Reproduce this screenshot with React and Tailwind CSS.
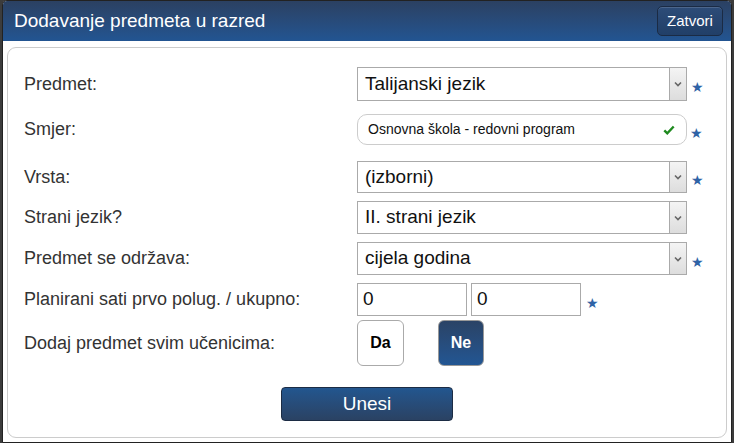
import React from "react";

const font = { fontFamily: '"Liberation Sans", Arial, sans-serif' };

const Star = ({ className = "" }) => (
  <span className={`text-[14px] leading-none text-[#2f63a6] ${className}`}>★</span>
);

const Select = ({ value }) => (
  <div className="flex h-full w-[330px] items-stretch border border-[#aaaaaa] bg-white">
    <div className="flex flex-1 items-center pl-[7px] text-[19px] text-[#111]">{value}</div>
    <div className="flex w-[17px] items-center justify-center border-l border-[#aaaaaa] bg-gradient-to-b from-[#f4f4f4] to-[#dddddd]">
      <svg width="8" height="6" viewBox="0 0 8 6">
        <path d="M1 1.5 L4 4.5 L7 1.5" fill="none" stroke="#666" strokeWidth="1.6" />
      </svg>
    </div>
  </div>
);

const Row = ({ label, className, children }) => (
  <div className={`flex items-center ${className}`}>
    <div className="w-[333px] text-[18px] text-[#333]">{label}</div>
    <div className="flex h-full items-center">{children}</div>
  </div>
);

export default function App() {
  return (
    <div className="h-[443px] w-[734px] overflow-hidden bg-[#3c3c3c]" style={font}>
      <div className="ml-[2px] flex h-full w-[730px] flex-col overflow-hidden rounded-t-[5px] border border-[#222] bg-white">
        {/* header */}
        <div className="flex h-[40px] shrink-0 items-center justify-between bg-gradient-to-b from-[#2b4162] to-[#225592] pl-[11px] pr-[8px]">
          <span className="text-[19px] text-white">Dodavanje predmeta u razred</span>
          <button className="h-[30px] w-[66px] rounded-[5px] border border-[#1b2b44] bg-gradient-to-b from-[#2d4c78] to-[#213f68] text-[15px] text-white shadow-[inset_0_1px_0_rgba(255,255,255,0.15)]">
            Zatvori
          </button>
        </div>

        {/* body */}
        <div className="flex-1 bg-white px-[4px] pb-[4px] pt-[6px]">
          <div className="flex h-full flex-col rounded-[9px] border border-[#cccccc] pl-[16px]">
            <Row label="Predmet:" className="mt-[19px] h-[34px]">
              <Select value="Talijanski jezik" />
              <Star className="ml-[4px] mt-[6px]" />
            </Row>

            <Row label="Smjer:" className="mt-[13px] h-[31px]">
              <div className="flex h-full w-[330px] items-center justify-between rounded-[10px] border border-[#cccccc] bg-white pl-[10px] pr-[11px]">
                <span className="text-[14px] text-[#111]">Osnovna škola - redovni program</span>
                <svg width="12" height="10" viewBox="0 0 12 10">
                  <path d="M1.3 5.3 L4.3 8.3 L10.7 1.5" fill="none" stroke="#1f8a1f" strokeWidth="2.4" />
                </svg>
              </div>
              <Star className="ml-[3px] mt-[6px]" />
            </Row>

            <Row label="Vrsta:" className="mt-[16px] h-[32px]">
              <Select value="(izborni)" />
              <Star className="ml-[4px] mt-[6px]" />
            </Row>

            <Row label="Strani jezik?" className="mt-[8px] h-[33px]">
              <Select value="II. strani jezik" />
            </Row>

            <Row label="Predmet se održava:" className="mt-[8px] h-[33px]">
              <Select value="cijela godina" />
              <Star className="ml-[4px] mt-[6px]" />
            </Row>

            <Row label="Planirani sati prvo polug. / ukupno:" className="mt-[8px] h-[33px]">
              <div className="flex h-full w-[110px] items-center border border-[#aaaaaa] pl-[5px] text-[19px] text-[#111]">0</div>
              <div className="ml-[4px] flex h-full w-[110px] items-center border border-[#aaaaaa] pl-[5px] text-[19px] text-[#111]">0</div>
              <Star className="ml-[5px] mt-[6px]" />
            </Row>

            <Row label="Dodaj predmet svim učenicima:" className="mt-[4px] h-[46px]">
              <button className="h-[46px] w-[47px] rounded-[6px] border border-[#aaaaaa] bg-white text-[16px] font-bold text-black">
                Da
              </button>
              <button className="ml-[34px] h-[46px] w-[46px] rounded-[6px] border border-[#999] bg-gradient-to-b from-[#2a4366] to-[#225693] text-[16px] font-bold text-white">
                Ne
              </button>
            </Row>

            <div className="mt-[21px] flex h-[34px] pl-[257px]">
              <button className="h-[34px] w-[172px] rounded-[4px] border border-[#1c2c44] bg-gradient-to-b from-[#22568f] to-[#2a4263] text-[19px] text-white">
                Unesi
              </button>
            </div>
          </div>
        </div>
      </div>
    </div>
  );
}
